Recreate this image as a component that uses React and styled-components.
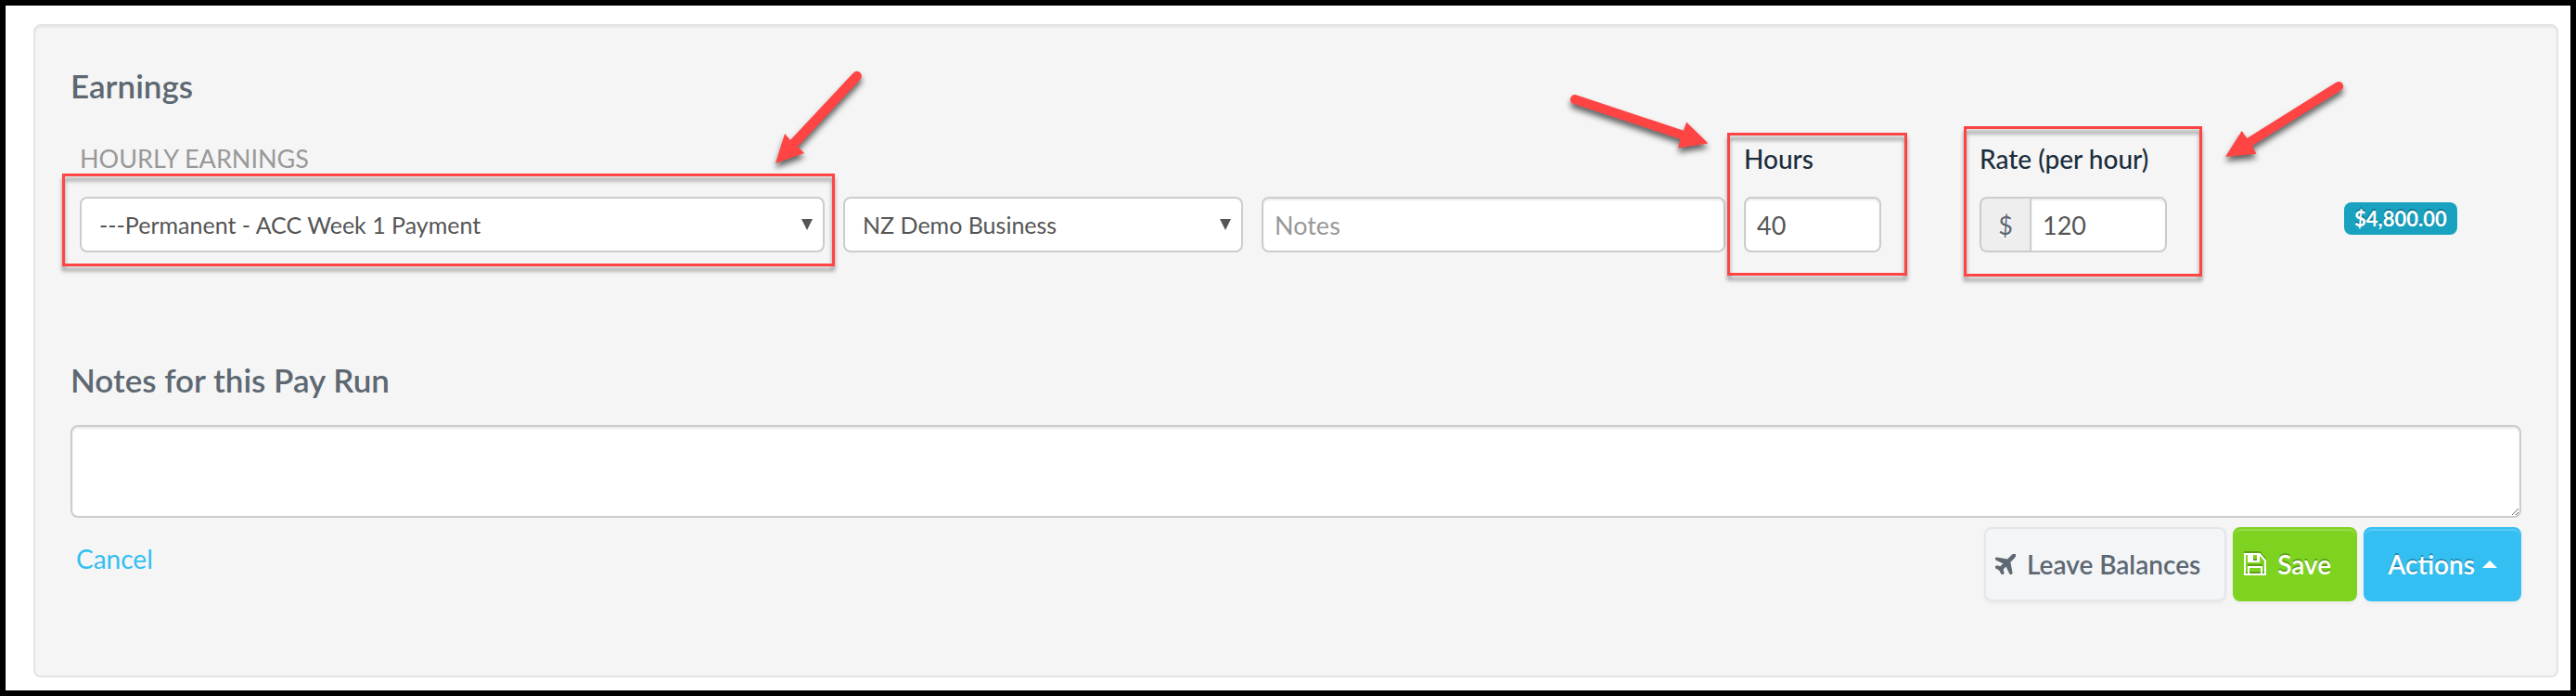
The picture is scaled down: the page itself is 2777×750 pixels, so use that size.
import React, { useState } from 'react';
import styled, { createGlobalStyle } from 'styled-components';

const arrows = {
    type: { w: 120, h: 120, d: 'M16 106L26 74L32 81L100 8.500A5 5 0 0 1 107.500 15.500L40 88L47 95Z' },
    hours: { w: 160, h: 80, d: 'M151.500 59.500L119 64.500L121.700 55L6 16.700A5 5 0 0 1 9 7.200L125 45.700L128 36.500Z' },
    rate: { w: 140, h: 100, d: 'M8 89L25.700 61L31.300 69L127.500 8.700A5 5 0 0 1 132.800 17.200L37 77L41.300 85.700Z' },
}

const Arrow = ({ name, ...pos }) => {
    const { w, h, d } = arrows[name]
    return (
        <ArrowSvg width={w} height={h} viewBox={`0 0 ${w} ${h}`} aria-hidden="true" {...pos}>
            <path d={d} fill="#ff4444" />
        </ArrowSvg>
    )
}

const DropDown = ({ id, label, options }) => (
    <>
        <Select id={id} aria-label={label}>
            {options.map(item => <option key={item}>{item}</option>)}
        </Select>
        <SelectArrow width="12" height="12" viewBox="0 0 12 12" aria-hidden="true">
            <path d="M0 0H12L6 12Z" fill="#555" />
        </SelectArrow>
    </>
)

const PlaneIcon = () => (
    <svg width="22" height="22" viewBox="0 0 1408 1408" aria-hidden="true">
        <path
            transform="translate(0 1402) scale(1 -1)"
            fill="currentColor"
            stroke="currentColor"
            strokeWidth="70"
            d="M1397 1324q0 -87 -149 -236l-240 -240l143 -746l1 -6q0 -14 -9 -23l-64 -64q-9 -9 -23 -9q-21 0 -29 18l-274 575l-245 -245q68 -238 68 -252t-9 -23l-64 -64q-9 -9 -23 -9q-18 0 -28 16l-155 280l-280 155q-17 9 -17 28q0 14 9 23l64 65q9 9 23 9t252 -68l245 245l-575 274q-18 8 -18 29q0 14 9 23l64 64q9 9 23 9q4 0 6 -1l746 -143l240 240q149 149 236 149q32 0 52.500 -20.500t20.500 -52.500z"
        />
    </svg>
)

const SaveIcon = () => (
    <DiskSvg width="24" height="24" viewBox="0 0 24 24" aria-hidden="true">
        <path d="M1 1H17L23 8V23H1Z" fill="none" stroke="#fff" strokeWidth="2" />
        <path d="M3 1H17V10H4V1ZM10 2V8H14V2Z" fill="#fff" fillRule="evenodd" />
        <path d="M5 23V15H19V23" fill="none" stroke="#fff" strokeWidth="2" />
    </DiskSvg>
)

const App = () => {

    const [ notes, setNotes ] = useState("")
    const [ hours, setHours ] = useState("40")
    const [ rate, setRate ] = useState("120")
    const [ runNotes, setRunNotes ] = useState("")

    const total = (Number(hours) * Number(rate)).toLocaleString('en-US', { minimumFractionDigits: 2, maximumFractionDigits: 2 })

    return (
        <Page>
            <GlobalStyle />
            <Panel>
                <Title>Earnings</Title>

                <EarningsRow>
                    <Field>
                        <Legend htmlFor="type">HOURLY EARNINGS</Legend>
                        <Control>
                            <DropDown id="type" options={["---Permanent - ACC Week 1 Payment"]} />
                            <Highlight $inset="-25px -11px -15px -19px" />
                            <Arrow name="type" $top={-142} $right={-51} />
                        </Control>
                    </Field>

                    <Control>
                        <DropDown id="location" label="Location" options={["NZ Demo Business"]} />
                    </Control>

                    <Input aria-label="Notes" placeholder="Notes" type="text" value={notes} onChange={e => setNotes(e.target.value)} />

                    <Field $fit>
                        <Label htmlFor="hours">Hours</Label>
                        <Input $short id="hours" type="text" value={hours} onChange={e => setHours(e.target.value)} />
                        <Highlight $inset="-9px -28px -25px -18px" />
                        <Arrow name="hours" $top={-57} $left={-190} />
                    </Field>

                    <Field $fit>
                        <Label htmlFor="rate">Rate (per hour)</Label>
                        <InputGroup>
                            <AddOn>$</AddOn>
                            <Input $short $joined id="rate" type="text" value={rate} onChange={e => setRate(e.target.value)} />
                        </InputGroup>
                        <Highlight $inset="-16px -38px -26px -17px" />
                        <Arrow name="rate" $top={-72} $right={-195} />
                    </Field>

                    <TotalCell>
                        <Badge>${total}</Badge>
                    </TotalCell>
                </EarningsRow>

                <Title as="label" htmlFor="runNotes">Notes for this Pay Run</Title>
                <TextArea id="runNotes" value={runNotes} onChange={e => setRunNotes(e.target.value)} />

                <Footer>
                    <Cancel href="#cancel">Cancel</Cancel>
                    <Buttons>
                        <Button type="button" $icon>
                            <PlaneIcon />
                            Leave Balances
                        </Button>
                        <Button type="button" $icon $color="#7ed321">
                            <SaveIcon />
                            Save
                        </Button>
                        <Button type="button" $color="#33bff2">
                            Actions
                            <Caret />
                        </Button>
                    </Buttons>
                </Footer>
            </Panel>
        </Page>
    )
}

export default App

const GlobalStyle = createGlobalStyle`
    * {
        box-sizing: border-box;
    }
    body {
        margin: 0;
        background: #fff;
        font-family: Lato, 'Open Sans', sans-serif;
    }
    input, select, textarea, button {
        font-family: inherit;
        margin: 0;
    }
`;

const Page = styled.main`
    min-height: 100vh;
    padding: 20px 13px 14px 30px;
    border: 6px solid #000;
`;

const Panel = styled.section`
    padding: 43px 38px 80px;
    background: #f5f5f5;
    border: 2px solid #e3e3e3;
    border-radius: 8px;
    box-shadow: inset 0 2px 2px rgba(0, 0, 0, 0.05);
`;

const Title = styled.h2`
    display: block;
    margin: 0;
    font-size: 35px;
    font-weight: 600;
    line-height: 42px;
    color: #5d6872;
`;

const EarningsRow = styled.div`
    display: grid;
    grid-template-columns: 803fr 431fr 500fr 234fr 373fr 191fr;
    column-gap: 20px;
    align-items: end;
    margin: 39px 0 116px 10px;
`;

const Field = styled.div`
    position: relative;
    display: flex;
    flex-direction: column;
    gap: 22px;
    justify-self: ${p => p.$fit ? 'start' : 'stretch'};
`;

const Control = styled.div`
    position: relative;
`;

const Label = styled.label`
    font-size: 28px;
    font-weight: 500;
    line-height: 38px;
    color: #1b2d3d;
`;

const Legend = styled(Label)`
    font-size: 27px;
    font-weight: 400;
    color: #999;
`;

const Select = styled.select`
    display: block;
    width: 100%;
    height: 60px;
    padding: 0 40px 0 19px;
    appearance: none;
    outline: none;
    background: #fff;
    border: 2px solid #ccc;
    border-radius: 8px;
    font-size: 25px;
    color: #555;
`;

const SelectArrow = styled.svg`
    position: absolute;
    top: 24px;
    right: 13px;
    pointer-events: none;
`;

const Input = styled.input`
    width: ${p => p.$short ? '148px' : '100%'};
    height: 60px;
    padding: 0 12px;
    outline: none;
    background: #fff;
    border: 2px solid #ccc;
    border-radius: ${p => p.$joined ? '0 8px 8px 0' : '8px'};
    box-shadow: inset 0 2px 2px rgba(0, 0, 0, 0.075);
    font-size: 27px;
    color: #555;
    &::placeholder {
        color: #999;
    }
`;

const InputGroup = styled.div`
    display: flex;
`;

const AddOn = styled.span`
    display: flex;
    align-items: center;
    justify-content: center;
    width: 54px;
    background: #eee;
    border: 2px solid #ccc;
    border-right: none;
    border-radius: 8px 0 0 8px;
    font-size: 27px;
    color: #5d6872;
    text-shadow: 0 2px 0 #fff;
`;

const TotalCell = styled.div`
    display: flex;
    align-items: flex-start;
    height: 60px;
    padding-top: 6px;
`;

const Badge = styled.span`
    padding: 0 11px;
    background: #18a2bf;
    border-radius: 8px;
    font-size: 22px;
    font-weight: 700;
    line-height: 35px;
    color: #fff;
    text-shadow: 0 -2px 0 rgba(0, 0, 0, 0.25);
`;

const Highlight = styled.div`
    position: absolute;
    inset: ${p => p.$inset};
    border: 3px solid #ff4444;
    filter: drop-shadow(0 5px 2px rgba(0, 0, 0, 0.4));
    pointer-events: none;
`;

const ArrowSvg = styled.svg`
    position: absolute;
    top: ${p => p.$top}px;
    ${p => p.$left !== undefined ? `left: ${p.$left}px;` : `right: ${p.$right}px;`}
    overflow: visible;
    filter: drop-shadow(0 5px 3px rgba(0, 0, 0, 0.6));
    pointer-events: none;
`;

const TextArea = styled.textarea`
    display: block;
    width: 100%;
    height: 100px;
    margin-top: 28px;
    padding: 8px 12px;
    outline: none;
    resize: both;
    background: #fff;
    border: 2px solid #ccc;
    border-radius: 8px;
    box-shadow: inset 0 2px 2px rgba(0, 0, 0, 0.075);
    font-size: 27px;
    color: #555;
`;

const Footer = styled.div`
    display: flex;
    align-items: flex-start;
    justify-content: space-between;
    margin-top: 10px;
`;

const Cancel = styled.a`
    padding: 15px 6px;
    font-size: 28px;
    line-height: 38px;
    color: #33bff2;
    text-decoration: none;
`;

const Buttons = styled.div`
    display: flex;
    gap: 7px;
`;

const Button = styled.button`
    display: flex;
    align-items: center;
    gap: ${p => p.$icon ? '12px' : '8px'};
    height: 80px;
    padding: ${p => p.$icon ? '0 26px 0 10px' : '0 24px'};
    background: ${p => p.$color || '#f4f5f7'};
    border: 2px solid ${p => p.$color || '#e3e6eb'};
    border-radius: 8px;
    box-shadow: ${p => p.$color ? 'inset 0 2px 0 rgba(255, 255, 255, 0.2), ' : ''}0 2px 4px rgba(0, 0, 0, 0.05);
    font-size: 28px;
    font-weight: 600;
    color: ${p => p.$color ? '#fff' : '#5d6872'};
    text-shadow: ${p => p.$color ? '0 -2px 0 rgba(0, 0, 0, 0.25)' : 'none'};
    cursor: pointer;
`;

const DiskSvg = styled.svg`
    overflow: visible;
    filter: drop-shadow(0 -2px 0 rgba(0, 0, 0, 0.25));
`;

const Caret = styled.span`
    border: 8px solid transparent;
    border-top: none;
    border-bottom-color: #fff;
`;
